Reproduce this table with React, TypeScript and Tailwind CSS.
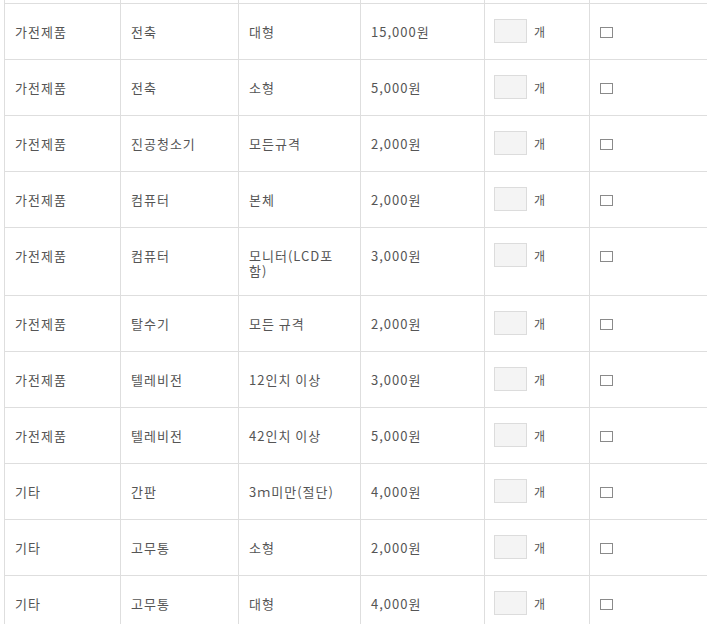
type Item = {
  category: string;
  name: string;
  spec: string;
  price: string;
};

const items: Item[] = [
  { category: "가전제품", name: "전축", spec: "대형", price: "15,000원" },
  { category: "가전제품", name: "전축", spec: "소형", price: "5,000원" },
  { category: "가전제품", name: "진공청소기", spec: "모든규격", price: "2,000원" },
  { category: "가전제품", name: "컴퓨터", spec: "본체", price: "2,000원" },
  { category: "가전제품", name: "컴퓨터", spec: "모니터(LCD포\n함)", price: "3,000원" },
  { category: "가전제품", name: "탈수기", spec: "모든 규격", price: "2,000원" },
  { category: "가전제품", name: "텔레비전", spec: "12인치 이상", price: "3,000원" },
  { category: "가전제품", name: "텔레비전", spec: "42인치 이상", price: "5,000원" },
  { category: "기타", name: "간판", spec: "3ｍ미만(절단)", price: "4,000원" },
  { category: "기타", name: "고무통", spec: "소형", price: "2,000원" },
  { category: "기타", name: "고무통", spec: "대형", price: "4,000원" },
];

const border = "border border-[#dedede]";
const textCell = `${border} px-[10px] pt-[20px] pb-[17px] align-top leading-[15px] whitespace-pre-line`;

export default function App() {
  return (
    <div
      className="w-[707px] h-[624px] overflow-hidden bg-white pl-[4px] text-[13px] text-[#555] tracking-[1px]"
      style={{ fontFamily: '"Noto Sans CJK KR", "Noto Sans", sans-serif' }}
    >
      <table className="table-fixed border-collapse w-[750px] mt-[-53px]">
        <colgroup>
          <col className="w-[116px]" />
          <col className="w-[118px]" />
          <col className="w-[122px]" />
          <col className="w-[124px]" />
          <col className="w-[105px]" />
          <col className="w-[165px]" />
        </colgroup>
        <tbody>
          {/* row scrolled out above the view */}
          <tr className="h-[56px]">
            <td className={border} />
            <td className={border} />
            <td className={border} />
            <td className={border} />
            <td className={border} />
            <td className={border} />
          </tr>
          {items.map((item, idx) => (
            <tr key={idx}>
              <td className={textCell}>{item.category}</td>
              <td className={textCell}>{item.name}</td>
              <td className={textCell}>{item.spec}</td>
              <td className={textCell}>{item.price}</td>
              <td className={`${border} px-[9px] pt-[15px] pb-[16px] align-top`}>
                <div className="flex items-center gap-[7px]">
                  <input
                    type="text"
                    className="w-[33px] h-[24px] bg-[#f4f4f4] border border-[#dcdcdc] outline-none"
                  />
                  <span className="leading-[15px] text-[12px]">개</span>
                </div>
              </td>
              <td className={`${border} px-[10px] pt-[15px] pb-[16px] align-top`}>
                <div className="flex items-center h-[24px] pt-[2px]">
                  <input
                    type="checkbox"
                    className="appearance-none w-[13px] h-[11px] border border-[#8a8a8a] bg-white"
                  />
                </div>
              </td>
            </tr>
          ))}
        </tbody>
      </table>
    </div>
  );
}
